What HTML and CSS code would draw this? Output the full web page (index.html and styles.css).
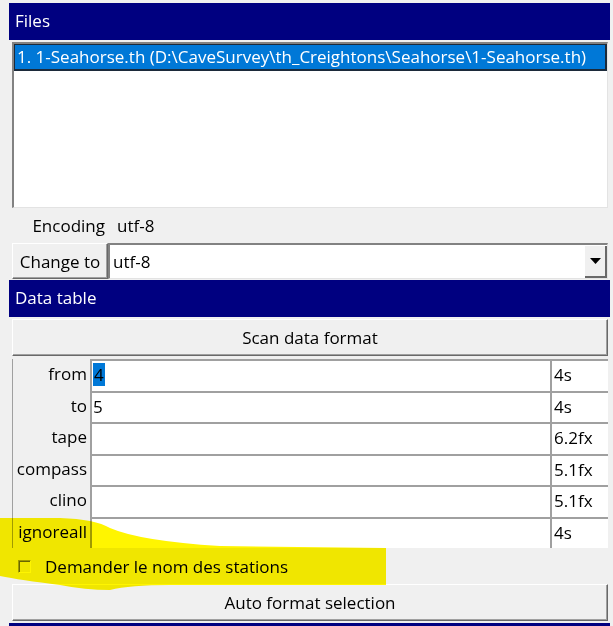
FILE: index.html
```html
<!DOCTYPE html>
<html lang="en">
<head>
    <meta charset="UTF-8">
    <title>Survey import</title>
    <link rel="stylesheet" href="styles.css">
</head>
<body>

    <div class="panel">
        <div class="section-title">Files</div>

        <div class="listbox">
            <div class="list-item selected">1. 1-Seahorse.th (D:\CaveSurvey\th_Creightons\Seahorse\1-Seahorse.th)</div>
        </div>

        <div class="encoding-row">
            <span class="encoding-label">Encoding</span>
            <span class="encoding-value">utf-8</span>
        </div>

        <div class="change-row">
            <button class="btn change-btn">Change to</button>
            <div class="combo">
                <span class="combo-text">utf-8</span>
                <span class="combo-arrow">
                    <svg width="11" height="6" viewBox="0 0 11 6"><path d="M0 0 H11 L5.5 6 Z" fill="#000"/></svg>
                </span>
            </div>
        </div>

        <div class="section-title data-title">Data table</div>

        <button class="btn wide-btn scan-btn">Scan data format</button>

        <!-- columns of the data line -->
        <div class="fields">
            <div class="field-label">from</div>
            <div class="entry"><span class="sel-text">4</span></div>
            <div class="entry fmt">4s</div>

            <div class="field-label">to</div>
            <div class="entry">5</div>
            <div class="entry fmt">4s</div>

            <div class="field-label">tape</div>
            <div class="entry"></div>
            <div class="entry fmt">6.2fx</div>

            <div class="field-label">compass</div>
            <div class="entry"></div>
            <div class="entry fmt">5.1fx</div>

            <div class="field-label">clino</div>
            <div class="entry"></div>
            <div class="entry fmt">5.1fx</div>

            <div class="field-label">ignoreall</div>
            <div class="entry"></div>
            <div class="entry fmt">4s</div>
        </div>

        <label class="check-row">
            <span class="checkbox"></span>
            <span>Demander le nom des stations</span>
        </label>

        <button class="btn wide-btn">Auto format selection</button>
    </div>

    <div class="bottom-bar"></div>

    <!-- marker highlight drawn over the screenshot -->
    <svg class="marker" width="400" height="80" viewBox="0 0 400 80">
        <path d="M0 1 L60 1 Q95 2 110 11 Q140 24 220 29 L386 31 L386 68 L170 68 Q130 68 110 73 Q85 73 60 68 Q20 63 0 59 Z" fill="#fff500"/>
    </svg>

</body>
</html>
```

FILE: styles.css
```css
body {
    margin: 0;
    padding: 3px 3px 0 9px;
    background-color: #f0f0f0;
    font-family: "Open Sans", "Noto Sans", sans-serif;
    font-size: 17px;
    color: #000;
    width: 601px;
    height: 626px;
    overflow: hidden;
    position: relative;
}

.panel {
    display: flex;
    flex-direction: column;
}

.section-title {
    height: 37px;
    line-height: 36px;
    padding-left: 6px;
    background-color: #000080;
    color: white;
}

.data-title {
    margin-top: 1px;
}

.listbox {
    margin: 2px 2px 0 3px;
    height: 163px;
    background: white;
    border-top: 2px solid #828282;
    border-left: 2px solid #828282;
    border-right: 1px solid #e3e3e3;
    border-bottom: 1px solid #e3e3e3;
}

.list-item {
    height: 24px;
    line-height: 23px;
    padding-left: 2px;
    white-space: nowrap;
}

.selected {
    background-color: #0078d7;
    color: white;
    border: 1px solid #1c2a3a;
    border-right-width: 2px;
    border-bottom-width: 2px;
}

.encoding-row {
    height: 35px;
    display: flex;
    align-items: center;
}

.encoding-label {
    width: 96px;
    text-align: right;
}

.encoding-value {
    margin-left: 12px;
}

.change-row {
    display: flex;
    height: 36px;
    padding-left: 3px;
}

.btn {
    font-family: inherit;
    font-size: 17px;
    color: #000;
    background-color: #f0f0f0;
    border: 1px solid;
    border-color: #fff #696969 #696969 #fff;
    box-shadow: inset -1px -1px 0 #a0a0a0;
    padding: 0;
    margin: 0;
}

.change-btn {
    width: 96px;
}

.combo {
    flex: 1;
    display: flex;
    align-items: center;
    margin-right: 2px;
    background: white;
    border-top: 2px solid #828282;
    border-left: 2px solid #828282;
    border-right: 1px solid #e3e3e3;
    border-bottom: 1px solid #e3e3e3;
}

.combo-text {
    flex: 1;
    padding-left: 3px;
}

.combo-arrow {
    width: 20px;
    height: 30px;
    display: flex;
    align-items: center;
    justify-content: center;
    background: #f0f0f0;
    border-right: 2px solid #696969;
    border-bottom: 2px solid #696969;
}

.scan-btn {
    margin-top: 2px;
}

.wide-btn {
    height: 37px;
    margin-left: 3px;
    margin-right: 2px;
}

.fields {
    display: grid;
    grid-template-columns: 77px 1fr 58px;
    grid-auto-rows: 31.5px;
    margin-top: 3px;
    margin-left: 3px;
    margin-right: 2px;
    border-left: 1px solid #a0a0a0;
}

.field-label {
    text-align: right;
    padding-right: 3px;
    line-height: 30px;
}

.entry {
    background: white;
    border-top: 2px solid #a0a0a0;
    border-left: 2px solid #a0a0a0;
    line-height: 28px;
    padding-left: 1px;
}

.fmt {
    padding-left: 2px;
}

.sel-text {
    background-color: #0078d7;
    color: #000;
    padding: 0 1px;
}

.check-row {
    display: flex;
    align-items: center;
    gap: 14px;
    height: 36px;
    padding-left: 9px;
}

.checkbox {
    width: 11px;
    height: 11px;
    border-top: 1px solid #a0a0a0;
    border-left: 1px solid #a0a0a0;
    border-right: 1px solid #fff;
    border-bottom: 1px solid #fff;
    box-shadow: inset 1px 1px 0 #696969;
}

.bottom-bar {
    position: absolute;
    left: 9px;
    right: 3px;
    top: 623px;
    height: 3px;
    background-color: #000080;
}

.marker {
    position: absolute;
    left: 0;
    top: 517px;
    mix-blend-mode: multiply;
}
```
